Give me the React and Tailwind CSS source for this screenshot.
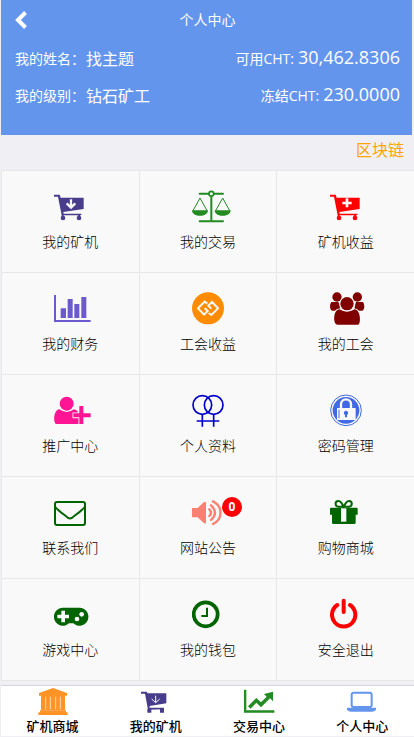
function CartBody() {
	return (
		<>
			<path d="M0 20h17l3 9h69v34l-61 9 1 5h53v5H23L12 26H0z" />
			<circle cx="27" cy="90" r="7" />
			<circle cx="75" cy="90" r="7" />
			<path d="M23 80h6v6h-6zM72 80h6v6h-6z" />
		</>
	);
}

const ICONS = {
	cartDown: (
		<>
			<CartBody />
			<path d="M51 34v24M38 46l13 13 13-13" fill="none" stroke="#f9f9f9" strokeWidth="7" />
		</>
	),
	cartPlus: (
		<>
			<CartBody />
			<path d="M51 31v27M37 45h28" fill="none" stroke="#f9f9f9" strokeWidth="8" />
		</>
	),
	scales: (
		<>
			<g fill="none" stroke="currentColor">
				<path d="M23 17h26M67 17h26M23 100h70M58 26v74" strokeWidth="6" strokeLinecap="round" />
				<circle cx="58" cy="17" r="7" strokeWidth="5" />
				<path d="M3 68l21-38 21 38M71 68l21-38 21 38" strokeWidth="3" />
			</g>
			<path d="M0 67h48c0 22-48 22-48 0zM68 67h48c0 22-48 22-48 0z" />
		</>
	),
	bars: <path d="M0 15h6v75h104v6H0zM20 55h16v29H20zM41 27h15v57H41zM61 42h15v42H61zM82 21h15v63H82z" />,
	coin: (
		<>
			<circle cx="48" cy="55" r="48" />
			<path
				d="M46 41l-8-6-20 20 18 19 11-11-9-9M50 69l8 6 20-20-18-19-11 11 9 9"
				fill="none"
				stroke="#f9f9f9"
				strokeWidth="6"
			/>
		</>
	),
	group: (
		<>
			<circle cx="21" cy="21" r="14" />
			<circle cx="82" cy="21" r="14" />
			<path d="M4 36h20c4 0 6 22 8 26H6c-8-2-7-20-2-26zM79 36h20c5 6 6 24-2 26H72c2-4 4-26 7-26z" />
			<g stroke="#f9f9f9" strokeWidth="5" paintOrder="stroke">
				<path d="M28 58q23 14 46 0c18 0 20 46 10 46H23c-16 0-13-46 5-46z" />
				<circle cx="51" cy="41" r="20" />
			</g>
		</>
	),
	userPlus: (
		<>
			<circle cx="38" cy="35" r="21" />
			<path d="M16 52q22 16 44 0c12 2 16 12 16 44H8C-4 96-2 54 16 52z" />
			<path
				d="M76 42h12v22h22v12H88v20H76V76H58V64h18z"
				stroke="#f9f9f9"
				strokeWidth="5"
				paintOrder="stroke"
			/>
		</>
	),
	venus: (
		<g fill="none" stroke="currentColor" strokeWidth="5">
			<circle cx="31" cy="39" r="28" />
			<circle cx="65" cy="39" r="28" />
			<path d="M31 67v37M65 67v37M14 87h68" />
		</g>
	),
	lock: (
		<>
			<circle cx="48" cy="55" r="46" fill="none" stroke="currentColor" strokeWidth="3" />
			<circle cx="48" cy="55" r="40" />
			<path d="M33 49V37c0-20 30-20 30 0v12" fill="none" stroke="#f9f9f9" strokeWidth="7" />
			<rect x="21" y="48" width="56" height="36" rx="2" fill="#f9f9f9" />
			<path d="M27 53v26" stroke="currentColor" strokeWidth="3" />
			<path d="M48 56a7 7 0 0 1 3 13v7h-6v-7a7 7 0 0 1 3-13z" />
		</>
	),
	mail: (
		<g fill="none" stroke="currentColor" strokeWidth="6" strokeLinejoin="round">
			<rect x="3" y="24" width="90" height="69" rx="6" />
			<path d="M4 39c8 10 18 17 30 26 10 11 18 11 28 0 12-9 22-16 30-26" />
		</g>
	),
	speaker: (
		<>
			<path d="M0 42h17l19-18h6v64h-6L17 70H0z" />
			<g fill="none" stroke="currentColor" strokeWidth="7" strokeLinecap="round">
				<path d="M52 46q10 10 0 20M57 34q24 22 0 44M63 22c30 15 30 53 0 68" />
			</g>
		</>
	),
	gift: (
		<>
			<path
				d="M41 40C36 26 30 21 25 21c-11 0-11 16 0 17h32c11-1 11-17 0-17-5 0-11 5-16 19z"
				fill="none"
				stroke="currentColor"
				strokeWidth="6"
			/>
			<path d="M3 41h77q3 0 3 4v17h-6v24q0 4-5 4H11q-5 0-5-4V62H0V45q0-4 3-4z" />
			<path d="M33 43h16v40H33z" fill="#f9f9f9" />
		</>
	),
	gamepad: (
		<>
			<path d="M27 35h49a27 27 0 1 1-18 47H45A27 27 0 1 1 27 35z" />
			<g fill="#f9f9f9">
				<path d="M22 44h11v12h12v11H33v12H22V67H10V56h12z" />
				<circle cx="69" cy="69" r="7" />
				<circle cx="83" cy="55" r="7" />
			</g>
		</>
	),
	clock: (
		<g fill="none" stroke="currentColor">
			<circle cx="41" cy="55" r="36" strokeWidth="11" />
			<path d="M45 35v25H28" strokeWidth="6" />
		</g>
	),
	power: (
		<g fill="none" stroke="currentColor" strokeWidth="12" strokeLinecap="round">
			<path d="M41 14v34M22 27a35 35 0 1 0 38 0" />
		</g>
	),
	bank: (
		<>
			<path d="M45 6l42 15v8H3v-8zM9 29h72v44H9z" />
			<path d="M6 73h78v6h5v8H1v-8h5z" />
			<path d="M23 32v38M37 32v38M53 32v38M67 32v38" stroke="#fff" strokeWidth="2" />
		</>
	),
	trend: (
		<>
			<path d="M0 11h7v62h84v7H0z" />
			<path d="M12 61l25-25 14 13 17-17-8-8 27-7v29l-9-9-27 27-14-14-17 18z" />
		</>
	),
	laptop: (
		<>
			<rect x="14" y="20" width="60" height="43" rx="6" fill="none" stroke="currentColor" strokeWidth="6" />
			<path d="M0 65h87v5q-2 7-11 7H11q-9 0-11-7z" />
		</>
	),
	cartSmall: (
		<>
			<path d="M0 17h17l3 5h56v30l-50 8v5h43v5l-48 1L12 23H0z" />
			<path d="M19 69h12v11H19zM57 69h12v11H57z" />
			<path d="M44 29v20M32 39l12 11 12-11" fill="none" stroke="#fff" strokeWidth="3" />
		</>
	),
};

const MENU = [
	{ label: "我的矿机", icon: "cartDown", color: "text-[#483d8b]" },
	{ label: "我的交易", icon: "scales", color: "text-[#228b22]" },
	{ label: "矿机收益", icon: "cartPlus", color: "text-[#ff0000]" },
	{ label: "我的财务", icon: "bars", color: "text-[#6a5acd]" },
	{ label: "工会收益", icon: "coin", color: "text-[#ff8c00]" },
	{ label: "我的工会", icon: "group", color: "text-[#800000]" },
	{ label: "推广中心", icon: "userPlus", color: "text-[#ff1493]" },
	{ label: "个人资料", icon: "venus", color: "text-[#0000cd]" },
	{ label: "密码管理", icon: "lock", color: "text-[#4169e1]" },
	{ label: "联系我们", icon: "mail", color: "text-[#006400]" },
	{ label: "网站公告", icon: "speaker", color: "text-[#fa8072]", badge: 0 },
	{ label: "购物商城", icon: "gift", color: "text-[#006400]" },
	{ label: "游戏中心", icon: "gamepad", color: "text-[#006400]" },
	{ label: "我的钱包", icon: "clock", color: "text-[#006400]" },
	{ label: "安全退出", icon: "power", color: "text-[#ff0000]" },
];

const TABS = [
	{ label: "矿机商城", icon: "bank", color: "text-[#ff9326]" },
	{ label: "我的矿机", icon: "cartSmall", color: "text-[#483d8b]" },
	{ label: "交易中心", icon: "trend", color: "text-[#228b22]" },
	{ label: "个人中心", icon: "laptop", color: "text-[#6495ed]" },
];

const ACCOUNT = [
	{ label: "我的姓名：", value: "找主题", coin: "可用CHT:", amount: "30,462.8306" },
	{ label: "我的级别：", value: "钻石矿工", coin: "冻结CHT:", amount: "230.0000" },
];

function MenuItem({ item }) {
	return (
		<a href="#" className="flex h-[102px] justify-center border-r border-b border-[#e7e7e7] bg-[#f9f9f9] pt-[17px]">
			<span className="w-14">
				<span className={`relative ml-3 block size-10 ${item.color}`}>
					<svg viewBox="0 0 120 120" className="size-10" fill="currentColor" aria-hidden="true">
						{ICONS[item.icon]}
					</svg>
					{item.badge !== undefined && (
						<span className="absolute top-[3px] left-[30px] flex size-5 items-center justify-center rounded-full bg-[#ff0000] text-xs font-bold text-white">
							{item.badge}
						</span>
					)}
				</span>
				<span className="mt-1 block text-sm leading-5 font-light whitespace-nowrap">{item.label}</span>
			</span>
		</a>
	);
}

export default function App() {
	return (
		<div
			lang="zh-CN"
			className="min-h-screen overflow-x-hidden bg-[#efeff4] pl-px font-['Open_Sans','Noto_Sans_CJK_SC',sans-serif] text-black"
		>
			<header className="mr-0.5 h-[135px] bg-[#6495ed] text-white">
				<div className="grid h-10 grid-cols-[1fr_auto_1fr] items-center pr-3 pl-3.5">
					<button type="button" aria-label="返回" className="justify-self-start">
						<svg viewBox="0 0 12 18" className="h-[18px] w-3" fill="none" stroke="currentColor" strokeWidth="4">
							<path d="M10.5 1.5L3 9l7.5 7.5" />
						</svg>
					</button>
					<h1 className="text-sm">个人中心</h1>
				</div>
				<dl className="pr-3 pl-3.5 text-sm">
					{ACCOUNT.map((row) => (
						<div key={row.label} className="flex h-[37px] items-center justify-between">
							<div className="flex items-center gap-px">
								<dt>{row.label}</dt>
								<dd className="text-base">{row.value}</dd>
							</div>
							<div className="-mt-1 flex items-baseline gap-1">
								<dt>{row.coin}</dt>
								<dd className="text-lg">{row.amount}</dd>
							</div>
						</div>
					))}
				</dl>
			</header>

			<p className="h-9 pt-[3px] pr-2.5 text-right text-base text-[#ffa500]">区块链</p>

			<main className="-mr-px grid grid-cols-3 border-l border-[#e7e7e7] shadow-[0_-1px_0_#e7e7e7]">
				{MENU.map((item) => (
					<MenuItem key={item.label} item={item} />
				))}
			</main>

			<nav className="mt-1 grid h-[51px] grid-cols-4 border-t border-[#d5d5da] bg-white">
				{TABS.map((tab) => (
					<a key={tab.label} href="#" className="flex flex-col items-center">
						<svg viewBox="0 0 90 90" className="size-[30px]" overflow="visible" fill="currentColor" aria-hidden="true">
							<g className={tab.color}>{ICONS[tab.icon]}</g>
						</svg>
						<span className="text-[13px] leading-5 font-medium">{tab.label}</span>
					</a>
				))}
			</nav>
		</div>
	);
}
